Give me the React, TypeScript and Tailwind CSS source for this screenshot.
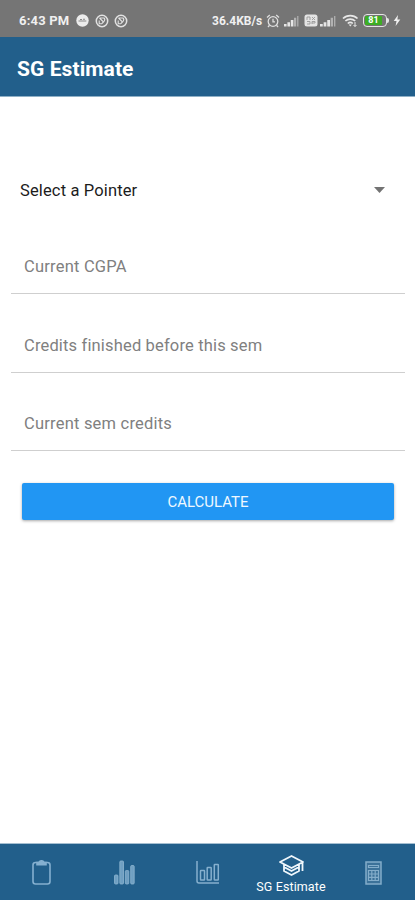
import React from "react";

function ClockBadge() {
  return (
    <svg width="14" height="14" viewBox="0 0 14 14" fill="none" stroke="#e2e2e2">
      <circle cx="7" cy="7" r="5.7" strokeWidth="1.5" />
      <path d="M4.5 4H9q1.5 1.5 0 3.5L7 9.5M4.5 4L8 7.5M4.2 6.5v3.2H7" strokeWidth="1.1" />
    </svg>
  );
}

function Signal({ width, className }: { width: number; className?: string }) {
  return (
    <svg width={width} height="12" viewBox="0 0 15 12" preserveAspectRatio="none" className={className}>
      <path d="M0 9h2.6v2.5H0zM3.4 7.2H6v4.3H3.4zM6.8 5h2.6v6.5H6.8z" fill="#e6e6e6" />
      <path d="M10 2.8h2.2v8.7H10zM13.2 1h1.2v10.5h-1.2z" fill="#b2b2b2" />
    </svg>
  );
}

function StatusBar() {
  return (
    <div className="flex h-[37px] items-center bg-[#757575] pt-[4px] pl-[19px] text-[#f0f0f0]">
      <span className="w-[57px] text-[13px] font-bold leading-none tracking-[0.2px] whitespace-nowrap">6:43 PM</span>
      <svg width="13" height="13" viewBox="0 0 13 13">
        <circle cx="6.5" cy="6.5" r="6.2" fill="#ececec" />
        <path d="M2.5 7h7.8M4 5.5h2M7 5.2h2" stroke="#888" strokeWidth="1.1" />
      </svg>
      <span className="ml-[6px]"><ClockBadge /></span>
      <span className="ml-[5px]"><ClockBadge /></span>
      <span className="ml-[84px] w-[54px] text-[12px] font-bold leading-none whitespace-nowrap">36.4KB/s</span>
      <svg width="14" height="14" viewBox="0 0 14 14" fill="none" stroke="#dedede" strokeWidth="1.3">
        <circle cx="7" cy="7.5" r="4.8" />
        <path d="M7 4.8v3h2M1 3.5L3.8 1M13 3.5L10.2 1M3.5 11.3L2 13M10.5 11.3L12 13" />
      </svg>
      <Signal width={15} className="ml-[4px]" />
      <svg className="ml-[5px]" width="14" height="13" viewBox="0 0 14 13">
        <rect x="0.5" y="0.5" width="13" height="12" rx="2.5" fill="#e4e4e4" />
        <path d="M3 6V3h3v3M8 3l3 3M11 3L8 6M3 7.5h3v2.5H3M8 10V7.5h3V9H8" stroke="#999" strokeWidth="0.9" fill="none" />
      </svg>
      <Signal width={16} className="ml-[2px]" />
      <svg className="ml-[6px]" width="17" height="14" viewBox="0 0 17 14" fill="none" stroke="#e8e8e8" strokeWidth="1.7">
        <path d="M1 4.5C5 .6 11.5 .6 15.5 4.5M3.4 7c2.8-2.6 7-2.6 9.8 0M5.8 9.5c1.5-1.4 3.5-1.4 5 0" />
        <path d="M6.7 10.5h3.2L8.3 12.5z" fill="#e8e8e8" stroke="none" />
        <path d="M13 8v4.5M11.5 11l1.5 1.5L14.5 11" strokeWidth="1" />
      </svg>
      <div className="ml-[4px] flex items-center">
        <div className="flex h-[13px] w-[24px] rounded-[4px] border-[1.5px] border-[#e6e6e6] p-[1px]">
          <div className="flex h-full w-[17px] items-center justify-center rounded-[1px] bg-[#3dae24] text-[9px] font-bold leading-none text-white">81</div>
        </div>
        <div className="h-[5px] w-[2px] rounded-r bg-[#e6e6e6]" />
      </div>
      <svg className="ml-[4px]" width="8" height="11" viewBox="0 0 8 11">
        <path d="M5 0L.7 6h2.8L2.6 11 7.3 4.5H4.4z" fill="#f0f0f0" />
      </svg>
    </div>
  );
}

function Field({ label, className }: { label: string; className: string }) {
  return (
    <div className={`mr-[10px] ml-[11px] border-b border-[#cfcfcf] pl-[13px] text-[16.5px] leading-[20px] text-[#808080] ${className}`}>
      {label}
    </div>
  );
}

export default function App() {
  return (
    <div className="flex h-[900px] w-[415px] flex-col bg-white font-[Roboto,sans-serif]">
      <StatusBar />
      <header className="flex h-[60px] items-center border-b border-[#8fb0c6] bg-[#225f8b] pt-[6px] pl-[17px] text-[21px] font-bold text-white">
        <h1 className="tracking-[0.08px]">SG Estimate</h1>
      </header>
      <main className="flex flex-1 flex-col">
        <div className="mt-[84px] flex h-[20px] items-center justify-between pr-[30px] pl-[20px]">
          <span className="text-[16.5px] leading-[20px] tracking-[0.14px] text-[#1c1c1c]">Select a Pointer</span>
          <svg width="11" height="6" viewBox="0 0 11 6" className="mt-[-2px]">
            <path d="M0 0h11L5.5 6z" fill="#737373" />
          </svg>
        </div>
        <Field label="Current CGPA" className="mt-[56px] h-[37px] tracking-[0.21px]" />
        <Field label="Credits finished before this sem" className="mt-[41px] h-[38px] pt-[1px] tracking-[0.16px]" />
        <Field label="Current sem credits" className="mt-[41px] h-[37px] tracking-[0.21px]" />
        <button className="mr-[21px] ml-[22px] mt-[32px] h-[37px] rounded-[2px] bg-[#2196f3] pt-[2px] text-[15px] text-[#eef8ff] shadow-[0_1px_3px_rgba(0,0,0,0.35)]">
          CALCULATE
        </button>
      </main>
      <nav className="grid h-[57px] grid-cols-5 border-t border-[#a5bfd1] bg-[#225f8b]">
        <div className="flex justify-center pt-[16px] pr-[1px]">
          <svg width="19" height="25" viewBox="0 0 19 25" fill="none" stroke="#85b0d0" strokeWidth="1.6">
            <rect x="1" y="2.5" width="17" height="21.5" rx="2.5" />
            <path d="M5 2.5h2C7.5.2 11.5.2 12 2.5h2v2.2H5z" fill="#85b0d0" />
          </svg>
        </div>
        <div className="flex justify-center pt-[16px]">
          <svg width="21" height="25" viewBox="0 0 21 25" fill="#6f9fc2" stroke="#8eb5d1" strokeWidth="0.8">
            <rect x="0.5" y="15" width="3.5" height="9" rx="1" />
            <rect x="5.8" y="1" width="3.7" height="23" rx="1" />
            <rect x="11.3" y="10.5" width="3.5" height="13.5" rx="1" />
            <rect x="16.7" y="5.5" width="3.5" height="18.5" rx="1" />
          </svg>
        </div>
        <div className="flex justify-center pt-[17px]">
          <svg width="24" height="24" viewBox="0 0 24 24" fill="none" stroke="#86b0ce" strokeWidth="1.5">
            <path d="M1 0v20q0 2 2 2h20" />
            <rect x="4.5" y="9.5" width="4" height="9.5" rx="0.5" />
            <rect x="11.2" y="6.5" width="4" height="12.5" rx="0.5" />
            <rect x="18.3" y="3.5" width="4" height="15.5" rx="0.5" />
          </svg>
        </div>
        <div className="flex flex-col items-center pt-[11px] pl-[1px] text-white">
          <svg width="25" height="21" viewBox="0 0 25 21" fill="none" stroke="#f0f7fc" strokeWidth="1.8" strokeLinejoin="round">
            <path d="M1 7L12.5 1 24 7 12.5 13zM5 9.5V16l7.5 4L20 16V9.5M5 12l7.5 4L20 12M23.5 7v9" />
          </svg>
          <span className="mt-[3px] text-[12.5px] leading-[15px] tracking-[0.1px] whitespace-nowrap">SG Estimate</span>
        </div>
        <div className="flex justify-center pt-[17px]">
          <svg width="17" height="24" viewBox="0 0 17 24" fill="none" stroke="#83adca" strokeWidth="1.5">
            <rect x="1" y="1" width="15" height="22" fill="#3c7299" />
            <path d="M3.5 4.5h10v2h-10zM3.5 9.5h10v10h-10zM6.8 9.5v10M10.2 9.5v10M3.5 13h10M3.5 16.3h10" strokeWidth="1.2" />
          </svg>
        </div>
      </nav>
    </div>
  );
}
